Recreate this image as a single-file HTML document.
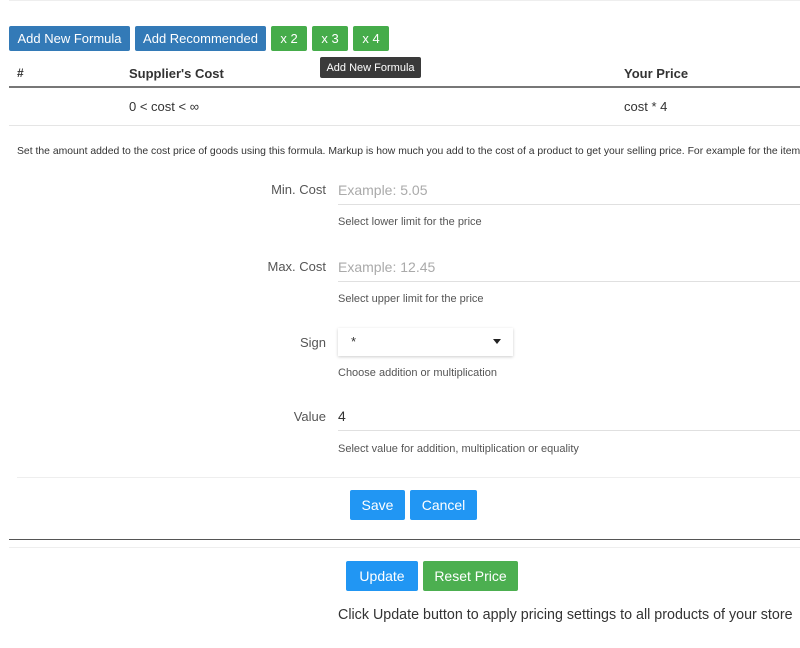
<!DOCTYPE html>
<html><head><style>
body{margin:0;width:800px;height:648px;background:#fff;font-family:"Liberation Sans",sans-serif;color:#333;position:relative;overflow:hidden}
.a{position:absolute;white-space:nowrap}
.btn{position:absolute;color:#fff;font-size:13px;display:flex;align-items:center;justify-content:center;border-radius:2px}
.bl{background:#337ab7}.gr{background:#45ac4a}
.line{position:absolute;left:9px;right:0}
.lbl{position:absolute;right:474px;font-size:13px;color:#555}
.help{position:absolute;left:338px;font-size:11px;color:#555}
.inp{position:absolute;left:338px;right:0;border-bottom:1px solid #e0e0e0;font-size:14px;color:#aaa;height:22px}
</style></head><body>
<div class="line" style="top:0;height:1px;background:#eee"></div>
<div class="btn bl" style="left:9px;top:26px;width:121px;height:25px">Add New Formula</div>
<div class="btn bl" style="left:135px;top:26px;width:131px;height:25px">Add Recommended</div>
<div class="btn gr" style="left:271px;top:26px;width:36px;height:25px">x 2</div>
<div class="btn gr" style="left:312px;top:26px;width:36px;height:25px">x 3</div>
<div class="btn gr" style="left:353px;top:26px;width:36px;height:25px">x 4</div>
<div class="btn" style="left:320px;top:57px;width:101px;height:21px;background:#3a3a3a;font-size:11px">Add New Formula</div>
<div class="a" style="left:17px;top:66px;font-size:12px;font-weight:bold">#</div>
<div class="a" style="left:129px;top:66px;font-size:13px;font-weight:bold">Supplier's Cost</div>
<div class="a" style="left:624px;top:66px;font-size:13px;font-weight:bold">Your Price</div>
<div class="line" style="top:86px;height:2px;background:#777"></div>
<div class="a" style="left:129px;top:99px;font-size:13px">0 &lt; cost &lt; ∞</div>
<div class="a" style="left:624px;top:99px;font-size:13px">cost * 4</div>
<div class="line" style="top:125px;height:1px;background:#e5e5e5"></div>
<div class="a" style="left:17px;top:146px;font-size:10.4px">Set the amount added to the cost price of goods using this formula. Markup is how much you add to the cost of a product to get your selling price. For example for the item</div>
<div class="lbl" style="top:182px">Min. Cost</div>
<div class="inp" style="top:182px">Example: 5.05</div>
<div class="help" style="top:216px">Select lower limit for the price</div>
<div class="lbl" style="top:259px">Max. Cost</div>
<div class="inp" style="top:259px">Example: 12.45</div>
<div class="help" style="top:293px">Select upper limit for the price</div>
<div class="lbl" style="top:335px">Sign</div>
<div class="a" style="left:338px;top:328px;width:175px;height:28px;box-shadow:0 1px 3px rgba(0,0,0,.2);background:#fff"><span style="position:absolute;left:13px;top:6px;font-size:13px">*</span><span style="position:absolute;right:12px;top:11px;border-left:4px solid transparent;border-right:4px solid transparent;border-top:5px solid #222"></span></div>
<div class="help" style="top:367px">Choose addition or multiplication</div>
<div class="lbl" style="top:409px">Value</div>
<div class="inp" style="top:408px;color:#333">4</div>
<div class="help" style="top:443px">Select value for addition, multiplication or equality</div>
<div class="line" style="left:17px;top:477px;height:1px;background:#eee"></div>
<div class="btn" style="left:350px;top:490px;width:55px;height:30px;background:#2196f3;font-size:14px">Save</div>
<div class="btn" style="left:410px;top:490px;width:67px;height:30px;background:#2196f3;font-size:14px">Cancel</div>
<div class="line" style="top:539px;height:1px;background:#555"></div>
<div class="line" style="top:547px;height:1px;background:#eee"></div>
<div class="btn" style="left:346px;top:561px;width:72px;height:30px;background:#2196f3;font-size:14px">Update</div>
<div class="btn" style="left:423px;top:561px;width:95px;height:30px;background:#4caf50;font-size:14px">Reset Price</div>
<div class="a" style="left:338px;top:607px;font-size:14.3px">Click Update button to apply pricing settings to all products of your store</div>
</body></html>
